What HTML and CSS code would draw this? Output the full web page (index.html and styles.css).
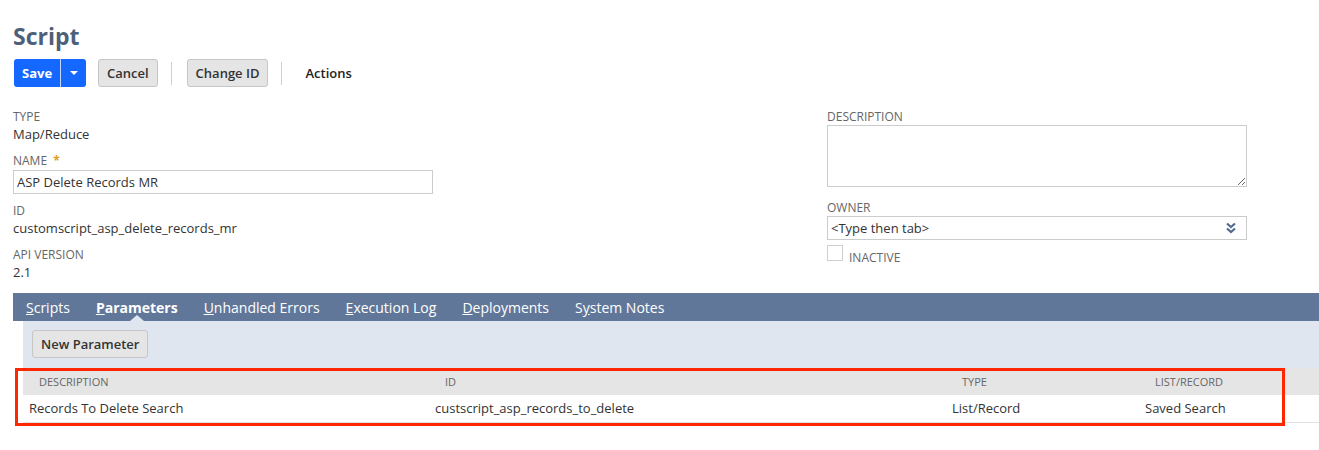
FILE: index.html
```html
<!DOCTYPE html>
<html lang="en">
<head>
  <meta charset="UTF-8">
  <meta name="viewport" content="width=device-width, initial-scale=1.0">
  <title>Script</title>
  <link rel="stylesheet" href="styles.css">
</head>
<body>
  <div class="page">
    <div class="page-header">
      <h1 class="page-title">Script</h1>
      <div class="toolbar">
        <div class="btn-split">
          <button class="btn btn-primary">Save</button>
          <button class="btn btn-primary btn-caret"><span class="caret"></span></button>
        </div>
        <button class="btn btn-cancel">Cancel</button>
        <span class="toolbar-sep"></span>
        <button class="btn">Change ID</button>
        <span class="toolbar-sep"></span>
        <span class="toolbar-menu">Actions</span>
      </div>
    </div>

    <div class="form-grid">
      <div class="form-col">
        <div class="field">
          <div class="field-label">Type</div>
          <div class="field-value">Map/Reduce</div>
        </div>
        <div class="field field-input">
          <div class="field-label">Name <span class="required">*</span></div>
          <input class="text-input" type="text" value="ASP Delete Records MR">
        </div>
        <div class="field">
          <div class="field-label">ID</div>
          <div class="field-value">customscript_asp_delete_records_mr</div>
        </div>
        <div class="field">
          <div class="field-label">API Version</div>
          <div class="field-value">2.1</div>
        </div>
      </div>

      <div class="form-col">
        <div class="field field-area">
          <div class="field-label">Description</div>
          <textarea class="text-area"></textarea>
        </div>
        <div class="field">
          <div class="field-label">Owner</div>
          <div class="select">
            <span>&lt;Type then tab&gt;</span>
            <svg class="select-icon" width="12" height="12" viewBox="0 0 12 12">
              <path d="M2 1.5l4 3.5 4-3.5M2 6.5l4 3.5 4-3.5" fill="none" stroke="#536a8f" stroke-width="2.2"/>
            </svg>
          </div>
          <div class="checkbox-row">
            <span class="checkbox"></span>
            <span class="checkbox-label">Inactive</span>
          </div>
        </div>
      </div>
    </div>

    <div class="tabs">
      <div class="tab-bar">
        <a class="tab"><u>S</u>cripts</a>
        <a class="tab tab-active"><u>P</u>arameters</a>
        <a class="tab"><u>U</u>nhandled Errors</a>
        <a class="tab"><u>E</u>xecution Log</a>
        <a class="tab"><u>D</u>eployments</a>
        <a class="tab">S<u>y</u>stem Notes</a>
      </div>
      <div class="subtab-panel">
        <button class="btn">New Parameter</button>
      </div>
      <div class="list-wrap">
        <div class="list">
          <div class="list-head">Description</div>
          <div class="list-head">ID</div>
          <div class="list-head">Type</div>
          <div class="list-head">List/Record</div>
          <div class="list-cell">Records To Delete Search</div>
          <div class="list-cell">custscript_asp_records_to_delete</div>
          <div class="list-cell">List/Record</div>
          <div class="list-cell">Saved Search</div>
        </div>
        <div class="highlight"></div>
      </div>
    </div>
  </div>
</body>
</html>
```

FILE: styles.css
```css
body {
  margin: 0;
  font-family: "Open Sans", "Liberation Sans", Arial, sans-serif;
  color: #333;
  background-color: #fff;
  overflow: hidden;
}

.page {
  padding: 0 0 30px 13px;
}

.page-header {
  padding-top: 22px;
}

.page-title {
  margin: 0;
  font-size: 23px;
  line-height: 28px;
  font-weight: 700;
  color: #4d5f79;
}

.toolbar {
  display: flex;
  align-items: center;
  margin-top: 9px;
  padding-left: 1px;
}

.btn {
  box-sizing: border-box;
  height: 28px;
  padding: 0 8px;
  border: 1px solid #c6c6c6;
  border-radius: 3px;
  background-color: #e5e5e5;
  font-family: inherit;
  font-size: 13px;
  font-weight: 600;
  line-height: 26px;
  color: #333;
  cursor: pointer;
}

.btn-split {
  display: flex;
  border-radius: 3px;
  overflow: hidden;
}

.btn-primary {
  width: 46px;
  border: none;
  border-radius: 0;
  background-color: #1467ff;
  color: #fff;
  font-weight: 700;
  line-height: 28px;
}

.btn-caret {
  width: 26px;
  border-left: 1px solid rgba(255, 255, 255, 0.75);
  display: flex;
  align-items: center;
  justify-content: center;
}

.caret {
  width: 0;
  height: 0;
  border-left: 4px solid transparent;
  border-right: 4px solid transparent;
  border-top: 4px solid #fff;
}

.btn-cancel {
  margin-left: 12px;
}

.toolbar-sep {
  width: 1px;
  height: 23px;
  margin: 0 15px 0 13px;
  background-color: #cfcfcf;
}

.toolbar-menu {
  margin-left: 8px;
  font-size: 13px;
  font-weight: 600;
  color: #222;
}

/* main fields */
.form-grid {
  display: grid;
  grid-template-columns: 420px 420px;
  column-gap: 394px;
  margin-top: 21px;
}

.field {
  margin-bottom: 9px;
}

.field:last-child {
  margin-bottom: 0;
}

.field-label {
  font-size: 12px;
  line-height: 17px;
  color: #666;
  text-transform: uppercase;
}

.required {
  color: #e29b1a;
  font-weight: 700;
  margin-left: 3px;
}

.field-value {
  font-size: 13px;
  line-height: 18px;
  color: #333;
}

.field-input {
  margin-bottom: 8px;
}

.text-input {
  display: block;
  box-sizing: border-box;
  width: 420px;
  height: 24px;
  margin: 1px 0 0;
  padding: 0 3px;
  border: 1px solid #ccc;
  font-family: inherit;
  font-size: 13px;
  color: #333;
  outline: none;
}

.field-area {
  margin-bottom: 12px;
}

.text-area {
  display: block;
  box-sizing: border-box;
  width: 420px;
  height: 62px;
  margin: 0;
  border: 1px solid #ccc;
  font-family: inherit;
  font-size: 13px;
}

.select {
  box-sizing: border-box;
  width: 420px;
  height: 24px;
  display: flex;
  align-items: center;
  justify-content: space-between;
  padding: 0 9px 0 3px;
  border: 1px solid #ccc;
  font-size: 13px;
  color: #333;
}

.checkbox-row {
  display: flex;
  margin-top: 5px;
}

.checkbox {
  box-sizing: border-box;
  width: 16px;
  height: 16px;
  border: 1px solid #cfcfcf;
}

.checkbox-label {
  margin-left: 6px;
  padding-top: 4px;
  font-size: 12px;
  line-height: 17px;
  color: #666;
  text-transform: uppercase;
}

/* tabs */
.tabs {
  margin-top: 12px;
}

.tab-bar {
  display: flex;
  height: 28px;
  background-color: #61779a;
}

.tab {
  position: relative;
  padding: 0 13px;
  font-size: 14px;
  line-height: 29px;
  color: #fff;
  text-decoration: none;
}

.tab-active {
  font-weight: 700;
}

.tab-active::after {
  content: "";
  position: absolute;
  left: 50%;
  bottom: 0;
  margin-left: -7px;
  border-left: 7px solid transparent;
  border-right: 7px solid transparent;
  border-bottom: 6px solid #dfe6ef;
}

.subtab-panel {
  margin-left: 10px;
  padding: 9px 9px 10px;
  background-color: #dfe6ef;
}

.list-wrap {
  position: relative;
  margin-left: 10px;
}

.list {
  display: grid;
  grid-template-columns: 406px 517px 193px 1fr;
}

.list-head {
  height: 27px;
  padding-left: 16px;
  background-color: #e5e5e5;
  font-size: 11px;
  line-height: 27px;
  color: #666;
  text-transform: uppercase;
}

.list-cell {
  height: 27px;
  padding-left: 6px;
  border-bottom: 1px solid #e2e2e2;
  font-size: 13px;
  line-height: 27px;
  color: #333;
}

.highlight {
  position: absolute;
  left: -8px;
  top: 0;
  box-sizing: border-box;
  width: 1270px;
  height: 58px;
  border: 3px solid #ff2600;
  pointer-events: none;
}
```
